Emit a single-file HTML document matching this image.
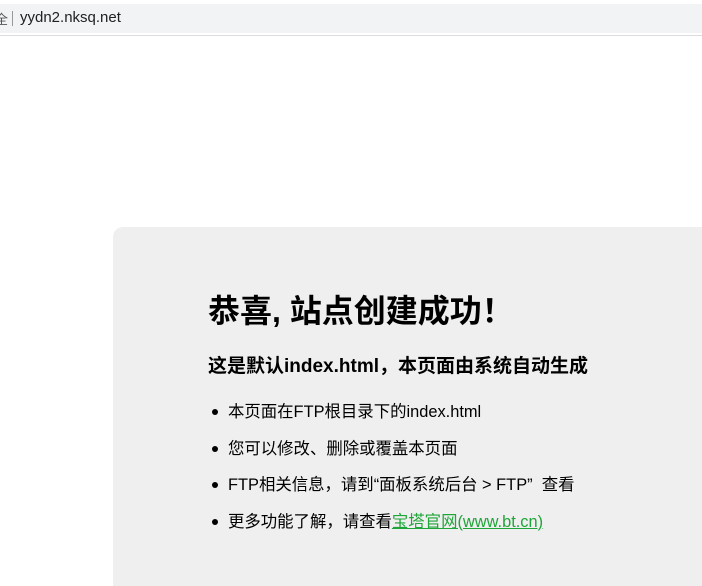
<!DOCTYPE html>
<html><head><meta charset="utf-8"><style>
*{margin:0;padding:0;box-sizing:border-box}
html,body{width:702px;height:586px;overflow:hidden;background:#fff;font-family:"Liberation Sans","Noto Sans CJK SC",sans-serif;color:#000;position:relative}
.bar{position:absolute;left:0;top:4px;width:702px;height:29px;background:#f1f3f4}
.line{position:absolute;left:0;top:35px;width:702px;height:1px;background:#dadce0}
.url{position:absolute;left:20px;top:5px;font-size:15px;color:#202124}
.pre{position:absolute;left:-5px;top:5px;font-size:13px;color:#555}
.sep{position:absolute;left:12px;top:7px;width:1px;height:15px;background:#999}
.box{position:absolute;left:113px;top:227px;width:620px;height:359px;background:#efefef;border-radius:10px 0 0 0}
h1{position:absolute;left:208px;top:286px;font-size:32px;font-weight:bold;white-space:nowrap}
h2{position:absolute;left:208px;top:351px;font-size:19px;font-weight:bold;white-space:nowrap}
ul{position:absolute;left:228px;top:401px;list-style:none;font-size:16.4px}
li{height:36.5px;line-height:22px;position:relative;white-space:nowrap}
li:before{content:"";position:absolute;left:-16px;top:8px;width:6px;height:6px;border-radius:50%;background:#000}
a{color:#20a53a;text-decoration:underline}
</style></head><body>
<div class="bar"><span class="pre">全</span><div class="sep"></div><span class="url">yydn2.nksq.net</span></div>
<div class="line"></div>
<div class="box"></div>
<h1>恭喜, 站点创建成功！</h1>
<h2>这是默认index.html，本页面由系统自动生成</h2>
<ul>
<li>本页面在FTP根目录下的index.html</li>
<li>您可以修改、删除或覆盖本页面</li>
<li>FTP相关信息，请到“面板系统后台 &gt; FTP”&nbsp; 查看</li>
<li>更多功能了解，请查看<a>宝塔官网(www.bt.cn)</a></li>
</ul>
</body></html>
